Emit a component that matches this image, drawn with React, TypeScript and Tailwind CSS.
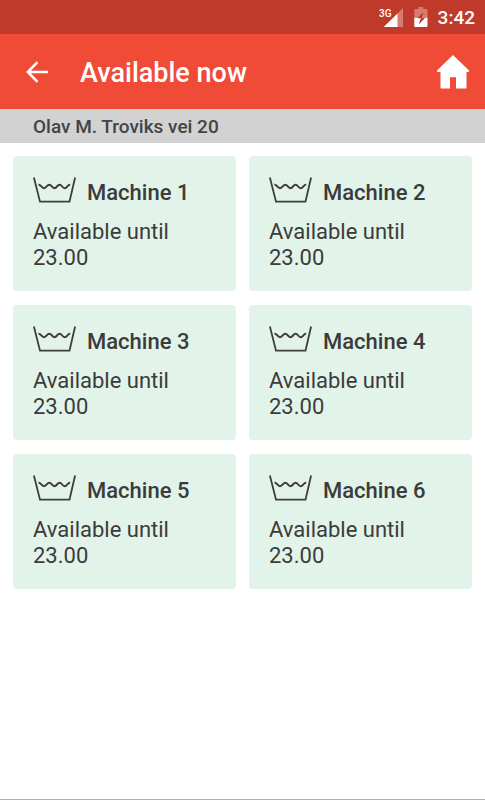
const machines = [1, 2, 3, 4, 5, 6].map((n) => ({
  name: `Machine ${n}`,
  until: "23.00",
}));

function SignalIcon() {
  return (
    <svg viewBox="0 0 25 20" className="h-5 w-[25px]" role="img" aria-label="3G signal">
      <path d="M24 1v19h-6V7z" fill="#d87b70" />
      <path d="M18.500 6.500V20H4.700z" fill="#fff" />
      <text x="0" y="9.500" fontSize="10" fontWeight="500" fill="#fff" className="font-['Roboto',sans-serif]">
        3G
      </text>
    </svg>
  );
}

function BatteryIcon() {
  return (
    <svg viewBox="0 0 14 20" className="h-5 w-3.5" role="img" aria-label="Battery charging">
      <path d="M4.300 0h5v2h3.200c.6 0 1 .4 1 1v7.700H.3V3c0-.6.4-1 1-1h3z" fill="#d87b70" />
      <path d="M.3 10.700h13.200V19c0 .6-.4 1-1 1H1.300c-.6 0-1-.4-1-1z" fill="#fff" />
      <path d="M9.500 5 3.200 11.300h3.600L4.800 17.500l6.400-6.700H7.700z" fill="#bf3a2b" />
    </svg>
  );
}

function BackIcon() {
  return (
    <svg viewBox="0 0 22 22" className="size-[22px]" fill="none" stroke="#fff" strokeWidth="2.500" aria-hidden="true">
      <path d="M11.500 1.200 1.800 11l9.700 9.800M1.800 11H22" />
    </svg>
  );
}

function HomeIcon() {
  return (
    <svg viewBox="0 0 32 34" className="h-[34px] w-8" fill="#fff" aria-hidden="true">
      <path d="M16 0 32 15.500c.3.800-.2 1.500-1 1.500h-1.500v15.500c0 .6-.4 1-1 1H19V22.300h-6v11.200H4.500c-.6 0-1-.4-1-1V17H1c-.8 0-1.300-.7-1-1.500z" />
    </svg>
  );
}

function WashIcon() {
  return (
    <svg viewBox="0 0 43 26" className="h-[26px] w-[43px]" fill="none" stroke="#403c3c" strokeWidth="1.800" aria-hidden="true">
      <path d="M.9.500 7 24.600h29.500L42.100.500" />
      <path
        d="M5.500 7.800C8 7.500 8.500 11.200 11 11.200s3-3.400 5.300-3.400 2.700 3.400 5.100 3.400 2.800-3.400 5.200-3.400 2.700 3.400 5.100 3.400S34.500 7.500 37.200 7.800"
        strokeWidth="2"
      />
    </svg>
  );
}

export default function App() {
  return (
    <div className="flex min-h-screen flex-col border-b border-[#b0b0b0] bg-white font-['Roboto',sans-serif] text-[#3b3b3b]">
      <div className="flex h-[34px] items-center justify-end bg-[#bf3a2b] pr-2.5 text-white">
        <SignalIcon />
        <span className="ml-2.5 flex">
          <BatteryIcon />
        </span>
        <span className="ml-2.5 pt-0.5 text-[19px] leading-6 font-medium">3:42</span>
      </div>

      <header className="flex h-[75px] items-center bg-[#f04b37] pr-4 pl-[26px] text-white">
        <button type="button" aria-label="Back">
          <BackIcon />
        </button>
        <h1 className="ml-8 flex-1 pt-0.5 text-[27px] leading-8 font-medium">Available now</h1>
        <button type="button" aria-label="Home">
          <HomeIcon />
        </button>
      </header>

      <h2 className="bg-[#d2d2d2] px-[33px] pt-[5px] pb-[3px] text-[19px] leading-[26px] font-medium text-[#444]">
        Olav M. Troviks vei 20
      </h2>

      <main className="grid grid-cols-2 gap-x-[13px] gap-y-3.5 px-[13px] pt-[13px]">
        {machines.map((m) => (
          <article key={m.name} className="rounded bg-[#e2f3e9] px-5 pt-[21px] pb-5">
            <div className="flex gap-[11px]">
              <WashIcon />
              <h3 className="pt-[3px] text-[22px] leading-[26px] font-medium">{m.name}</h3>
            </div>
            <p className="mt-[13px] max-w-40 text-[22px] leading-[26px]">
              Available until {m.until}
            </p>
          </article>
        ))}
      </main>
    </div>
  );
}
